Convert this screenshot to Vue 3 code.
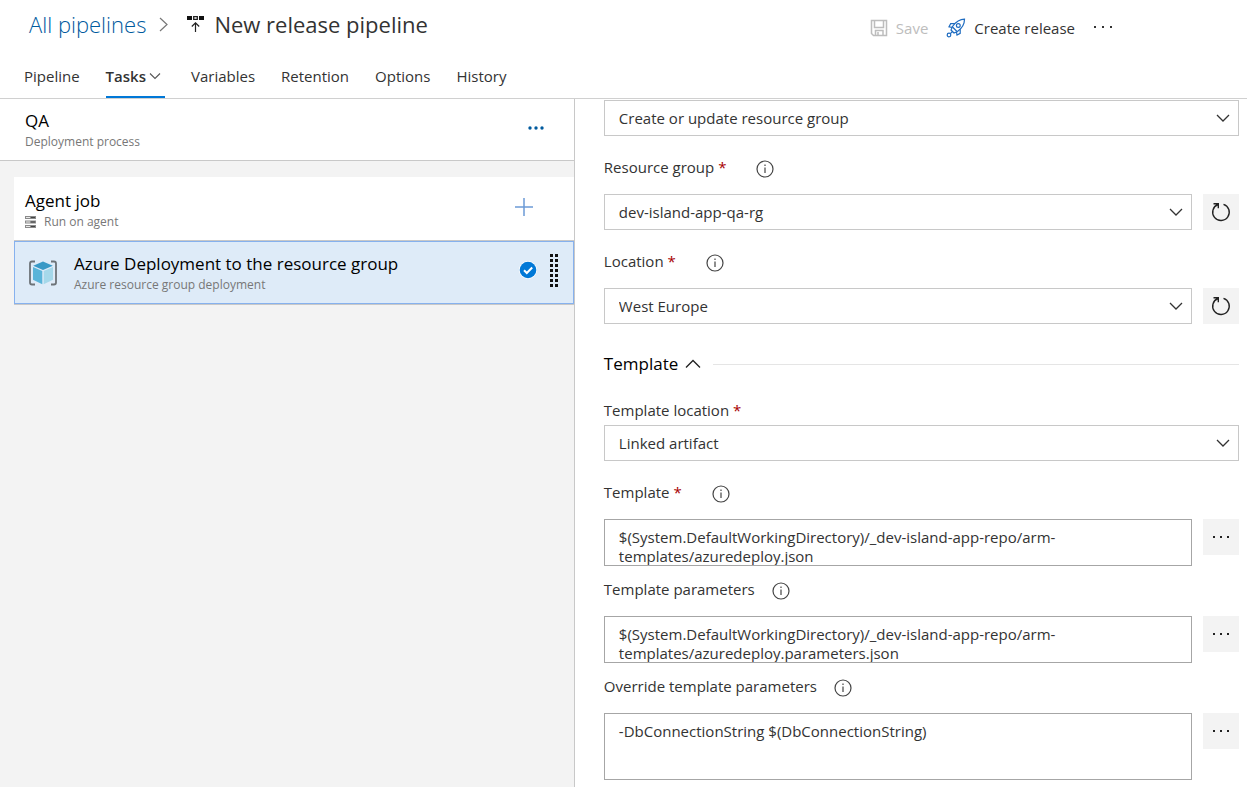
<script setup>
import { ref } from 'vue'

const tabs = ['Pipeline', 'Tasks', 'Variables', 'Retention', 'Options', 'History']
const activeTab = ref('Tasks')

const action = ref('Create or update resource group')
const resourceGroup = ref('dev-island-app-qa-rg')
const location = ref('West Europe')
const templateLocation = ref('Linked artifact')
const template = ref('$(System.DefaultWorkingDirectory)/_dev-island-app-repo/arm-templates/azuredeploy.json')
const templateParameters = ref('$(System.DefaultWorkingDirectory)/_dev-island-app-repo/arm-templates/azuredeploy.parameters.json')
const overrideParameters = ref('-DbConnectionString $(DbConnectionString)')
</script>

<template>
  <div class="page">
    <header class="header">
      <div class="title-bar">
        <nav class="breadcrumb" aria-label="Breadcrumb">
          <a href="#" class="crumb-link">All pipelines</a>
          <svg class="crumb-sep" width="10" height="16" viewBox="0 0 10 16"><path d="M1 2l7 6.500-7 6.500" fill="none" stroke="#777" stroke-width="1.2" /></svg>
          <svg class="crumb-icon" width="17" height="18" viewBox="0 0 17 18">
            <path d="M0 1h5v4H0zM12 1h5v4h-5z" fill="#111" />
            <path d="M6.7 1.7h3.6v2.6H6.7z" fill="none" stroke="#222" stroke-width="1.3" />
            <path d="M8.500 17V8.500M4.800 11.500l3.700-3.700 3.700 3.700" fill="none" stroke="#222" stroke-width="1.200" />
          </svg>
          <h1>New release pipeline</h1>
        </nav>
        <div class="commands">
          <button type="button" class="command" disabled>
            <svg width="18" height="18" viewBox="0 0 18 18" fill="none" stroke="#bdbdbd" stroke-width="1.500">
              <path d="M1.500 1.500h15v15H3.500l-2-2zM4.500 1.500v7h9v-7M5.500 16.500v-5h7.500v5M8 13v3" />
            </svg>
            <span>Save</span>
          </button>
          <button type="button" class="command">
            <svg width="20" height="20" viewBox="0 0 20 20" fill="none" stroke="#1f6cc0" stroke-width="1.200">
              <path d="M18.500 1.200c-5 0-8 1.800-12 7.300l-1.500 3.500 3 3 3.500-1.500c5.500-4 7-7.300 7-12.300z" />
              <circle cx="12.300" cy="7.500" r="1.900" />
              <path d="M8.800 5.700H4.700L3 8.800l3 .5M14.200 11.200v4.100L11 17l-.5-3M6.500 9l4.500 4.500" />
              <circle cx="3" cy="17" r="1.800" />
              <path d="M4.300 15.700l2.200-2.200" />
            </svg>
            <span>Create release</span>
          </button>
          <button type="button" class="command" aria-label="More commands">
            <svg width="20" height="4" viewBox="0 0 20 4"><path d="M1 0h2v2H1zM9 0h2v2H9zM17 0h2v2h-2z" fill="#333" /></svg>
          </button>
        </div>
      </div>
      <nav class="tabs" aria-label="Release pipeline">
        <a
          v-for="tab in tabs"
          :key="tab"
          href="#"
          class="tab"
          :class="{ active: tab === activeTab }"
          @click.prevent="activeTab = tab"
        >
          {{ tab }}
          <svg v-if="tab === 'Tasks'" width="12" height="8" viewBox="0 0 12 8"><path d="M1 1.500l5 5 5-5" fill="none" stroke="#555" stroke-width="1.100" /></svg>
        </a>
      </nav>
    </header>

    <main class="content">
      <section class="tasks">
        <div class="stage">
          <div class="text">
            <h2>QA</h2>
            <p>Deployment process</p>
          </div>
          <button type="button" class="icon-button" aria-label="Stage options">
            <svg width="16" height="4" viewBox="0 0 16 4" fill="#005a9e"><circle cx="2" cy="2" r="1.700" /><circle cx="8" cy="2" r="1.700" /><circle cx="14" cy="2" r="1.700" /></svg>
          </button>
        </div>
        <div class="task-list">
          <div class="job">
            <div class="text">
              <h2>Agent job</h2>
              <p>
                <svg width="11" height="12" viewBox="0 0 11 12">
                  <path d="M0 0h11v3H0zM0 4.500h11v3H0zM0 9h11v3H0z" fill="#8a8a8a" />
                  <path d="M1 1.500h4M1 6h4M1 10.500h4" stroke="#e8e8e8" />
                  <path d="M6 1.500h4M6 6h4M6 10.500h4" stroke="#444" />
                </svg>
                Run on agent
              </p>
            </div>
            <button type="button" class="icon-button" aria-label="Add a task">
              <svg width="18" height="18" viewBox="0 0 18 18"><path d="M9 0v18M0 9h18" stroke="#6c9bd6" stroke-width="1.500" /></svg>
            </button>
          </div>
          <div class="task">
            <svg class="task-icon" width="28" height="26" viewBox="0 0 28 26">
              <path d="M6 1.500H3q-2 0-2 2v19q0 2 2 2h3M22 1.500h3q2 0 2 2v19q0 2-2 2h-3" fill="none" stroke="#6d7378" stroke-width="1.800" />
              <path d="M14 1.500l9.800 4.200L14 10 4.200 5.700z" fill="#3999c6" />
              <path d="M4 7l9.300 4v13.300L4 19.800z" fill="#59b4d9" />
              <path d="M24 7l-9.300 4v13.300l9.300-4.500z" fill="#a5d8ea" />
            </svg>
            <div class="text">
              <h2>Azure Deployment to the resource group</h2>
              <p>Azure resource group deployment</p>
            </div>
            <div class="task-state">
              <svg width="18" height="18" viewBox="0 0 18 18">
                <circle cx="9" cy="9" r="9" fill="#fff" />
                <circle cx="9" cy="9" r="8.300" fill="#0078d7" />
                <path d="M5 9.200l2.800 2.800L13.200 6.500" fill="none" stroke="#fff" stroke-width="2" />
              </svg>
              <svg width="8" height="33" viewBox="0 0 8 33">
                <path d="M1.500 0v33M6.500 0v33" stroke="#111" stroke-width="3" stroke-dasharray="3 2" />
              </svg>
            </div>
          </div>
        </div>
      </section>

      <form class="form" @submit.prevent>
        <div class="select">
          <select v-model="action" aria-label="Action"><option>Create or update resource group</option></select>
          <svg width="14" height="9" viewBox="0 0 14 9"><path d="M1 1l6 6 6-6" /></svg>
        </div>

        <div class="label-row">
          <label for="resource-group">Resource group <span class="star">*</span></label>
          <svg class="info" width="18" height="18" viewBox="0 0 18 18"><circle cx="9" cy="9" r="8" /><path d="M9 7.500V13M9 4.500V6" /></svg>
        </div>
        <div class="control-row">
          <div class="select">
            <select id="resource-group" v-model="resourceGroup"><option>dev-island-app-qa-rg</option></select>
            <svg width="14" height="9" viewBox="0 0 14 9"><path d="M1 1l6 6 6-6" /></svg>
          </div>
          <button type="button" class="side-button" aria-label="Refresh resource groups">
            <svg width="20" height="20" viewBox="0 0 20 20"><path d="M12.500 2.300a8.300 8.300 0 1 1-5.600.2M2.500 1.800h4.800v4.500" fill="none" stroke="#222" stroke-width="1.400" /></svg>
          </button>
        </div>

        <div class="label-row">
          <label for="location">Location <span class="star">*</span></label>
          <svg class="info" width="18" height="18" viewBox="0 0 18 18"><circle cx="9" cy="9" r="8" /><path d="M9 7.500V13M9 4.500V6" /></svg>
        </div>
        <div class="control-row">
          <div class="select">
            <select id="location" v-model="location"><option>West Europe</option></select>
            <svg width="14" height="9" viewBox="0 0 14 9"><path d="M1 1l6 6 6-6" /></svg>
          </div>
          <button type="button" class="side-button" aria-label="Refresh locations">
            <svg width="20" height="20" viewBox="0 0 20 20"><path d="M12.500 2.300a8.300 8.300 0 1 1-5.600.2M2.500 1.800h4.800v4.500" fill="none" stroke="#222" stroke-width="1.400" /></svg>
          </button>
        </div>

        <div class="section-heading">
          <button type="button">
            Template
            <svg width="16" height="10" viewBox="0 0 16 10"><path d="M1 8.500l7-7 7 7" fill="none" stroke="#222" stroke-width="1.300" /></svg>
          </button>
          <hr />
        </div>

        <div class="label-row plain">
          <label for="template-location">Template location <span class="star">*</span></label>
        </div>
        <div class="select">
          <select id="template-location" v-model="templateLocation"><option>Linked artifact</option></select>
          <svg width="14" height="9" viewBox="0 0 14 9"><path d="M1 1l6 6 6-6" /></svg>
        </div>

        <div class="label-row">
          <label for="template">Template <span class="star">*</span></label>
          <svg class="info" width="18" height="18" viewBox="0 0 18 18"><circle cx="9" cy="9" r="8" /><path d="M9 7.500V13M9 4.500V6" /></svg>
        </div>
        <div class="control-row">
          <textarea id="template" v-model="template" spellcheck="false"></textarea>
          <button type="button" class="side-button" aria-label="Browse template">
            <svg width="18" height="4" viewBox="0 0 18 4"><path d="M1 1h2v2H1zM8 1h2v2H8zM15 1h2v2h-2z" fill="#222" /></svg>
          </button>
        </div>

        <div class="label-row tight">
          <label for="template-parameters">Template parameters</label>
          <svg class="info" width="18" height="18" viewBox="0 0 18 18"><circle cx="9" cy="9" r="8" /><path d="M9 7.500V13M9 4.500V6" /></svg>
        </div>
        <div class="control-row">
          <textarea id="template-parameters" v-model="templateParameters" spellcheck="false"></textarea>
          <button type="button" class="side-button" aria-label="Browse template parameters">
            <svg width="18" height="4" viewBox="0 0 18 4"><path d="M1 1h2v2H1zM8 1h2v2H8zM15 1h2v2h-2z" fill="#222" /></svg>
          </button>
        </div>

        <div class="label-row tight">
          <label for="override-parameters">Override template parameters</label>
          <svg class="info" width="18" height="18" viewBox="0 0 18 18"><circle cx="9" cy="9" r="8" /><path d="M9 7.500V13M9 4.500V6" /></svg>
        </div>
        <div class="control-row">
          <textarea id="override-parameters" v-model="overrideParameters" class="tall" spellcheck="false"></textarea>
          <button type="button" class="side-button" aria-label="Edit override parameters">
            <svg width="18" height="4" viewBox="0 0 18 4"><path d="M1 1h2v2H1zM8 1h2v2H8zM15 1h2v2h-2z" fill="#222" /></svg>
          </button>
        </div>
      </form>
    </main>
  </div>
</template>

<style>
body {
  background: #fff;
}
</style>

<style scoped>
.page,
.page * {
  box-sizing: border-box;
}
.page {
  display: flex;
  flex-direction: column;
  height: 100vh;
  overflow: hidden;
  font-family: "Open Sans", "Noto Sans", sans-serif;
  font-size: 15px;
  line-height: 20px;
  color: #333;
}
button,
select,
textarea {
  font: inherit;
  color: inherit;
}
button {
  padding: 0;
  border: 0;
  background: none;
}
svg {
  display: block;
  flex: none;
}
h1,
h2,
p {
  margin: 0;
  font-weight: 400;
}
.header {
  flex: none;
  border-bottom: 1px solid #d0d0d0;
}
.title-bar {
  display: grid;
  grid-template-columns: 1fr auto;
  height: 56px;
  padding: 0 134px 0 29px;
}
.breadcrumb {
  display: flex;
  align-items: center;
  height: 48px;
}
.crumb-link {
  font-size: 22px;
  font-weight: 300;
  color: #005a9e;
  text-decoration: none;
}
.crumb-sep {
  margin: 0 18px 0 13px;
}
h1 {
  margin-left: 10px;
  font-size: 22px;
}
.commands {
  display: flex;
  align-items: center;
  gap: 18px;
}
.command {
  display: flex;
  align-items: center;
  gap: 8px;
}
.command:disabled {
  color: #bdbdbd;
}
.tabs {
  display: flex;
  gap: 26px;
  padding: 0 24px;
}
.tab {
  display: flex;
  align-items: center;
  gap: 3px;
  height: 42px;
  border-bottom: 2px solid transparent;
  color: #333;
  text-decoration: none;
}
.tab.active {
  padding-right: 4px;
  border-color: #0078d7;
  font-weight: 600;
}
.content {
  display: grid;
  grid-template-columns: 461fr 539fr;
  flex: 1;
  min-height: 0;
}
.tasks {
  border-right: 1px solid #c8c8c8;
  background: #f3f3f3;
}
.stage,
.job,
.task {
  display: flex;
  align-items: center;
}
.stage {
  height: 62px;
  padding: 2px 30px 0 25px;
  border-bottom: 1px solid #c8c8c8;
  background: #fff;
}
.text {
  flex: 1;
  min-width: 0;
}
h2 {
  font-size: 17px;
  line-height: 22px;
  color: #000;
}
.text p {
  display: flex;
  align-items: center;
  gap: 8px;
  margin-top: 1px;
  font-size: 12px;
  line-height: 18px;
  color: #777;
}
.icon-button,
.task-state {
  display: flex;
  align-items: center;
  align-self: flex-start;
  height: 54px;
}
.task-list {
  padding: 16px 0 0 14px;
}
.job {
  height: 64px;
  padding: 3px 41px 0 11px;
  border-bottom: 1px solid #c8c8c8;
  background: #fff;
}
.task {
  height: 63px;
  padding: 1px 15px 0 14px;
  border: 1px solid #86b1ee;
  background: #deebf8;
  box-shadow: 0 1px #c8c8c8;
}
.task-icon {
  margin-right: 17px;
}
.task-state {
  gap: 13px;
}
.form {
  padding: 1px 8px 8px 29px;
}
.select {
  display: grid;
  flex: 1;
}
.select select,
.select svg {
  grid-area: 1 / 1;
}
.select select {
  width: 100%;
  height: 36px;
  padding: 0 40px 0 14px;
  border: 1px solid #c8c8c8;
  border-radius: 0;
  background: #fff;
  appearance: none;
}
.select svg {
  place-self: center end;
  margin-right: 9px;
  fill: none;
  stroke: #333;
  stroke-width: 1.300;
  pointer-events: none;
}
.label-row {
  display: flex;
  align-items: center;
  gap: 17px;
  height: 18px;
  margin: 22px 0 18px;
}
.label-row.plain {
  margin: 0 0 6px;
}
.label-row.tight {
  margin-top: 14px;
}
.star {
  margin-right: 13px;
  color: #a80000;
}
.info {
  margin-top: 3px;
  fill: none;
  stroke: #444;
  stroke-width: 1.200;
}
.control-row {
  display: flex;
  align-items: flex-start;
  gap: 11px;
}
.side-button {
  display: grid;
  place-items: center;
  flex: none;
  width: 36px;
  height: 36px;
  background: #f3f3f3;
}
.section-heading {
  display: flex;
  align-items: center;
  gap: 12px;
  margin: 29px 0 26px;
}
.section-heading button {
  display: flex;
  align-items: center;
  gap: 7px;
  font-size: 17px;
  line-height: 22px;
  color: #000;
}
hr {
  flex: 1;
  margin: 0;
  border: 0;
  border-top: 1px solid #e5e5e5;
}
textarea {
  flex: 1;
  height: 47px;
  padding: 8px 14px 0;
  border: 1px solid #a6a6a6;
  border-radius: 0;
  line-height: 19px;
  overflow: hidden;
  resize: none;
}
.tall {
  height: 67px;
}
</style>
